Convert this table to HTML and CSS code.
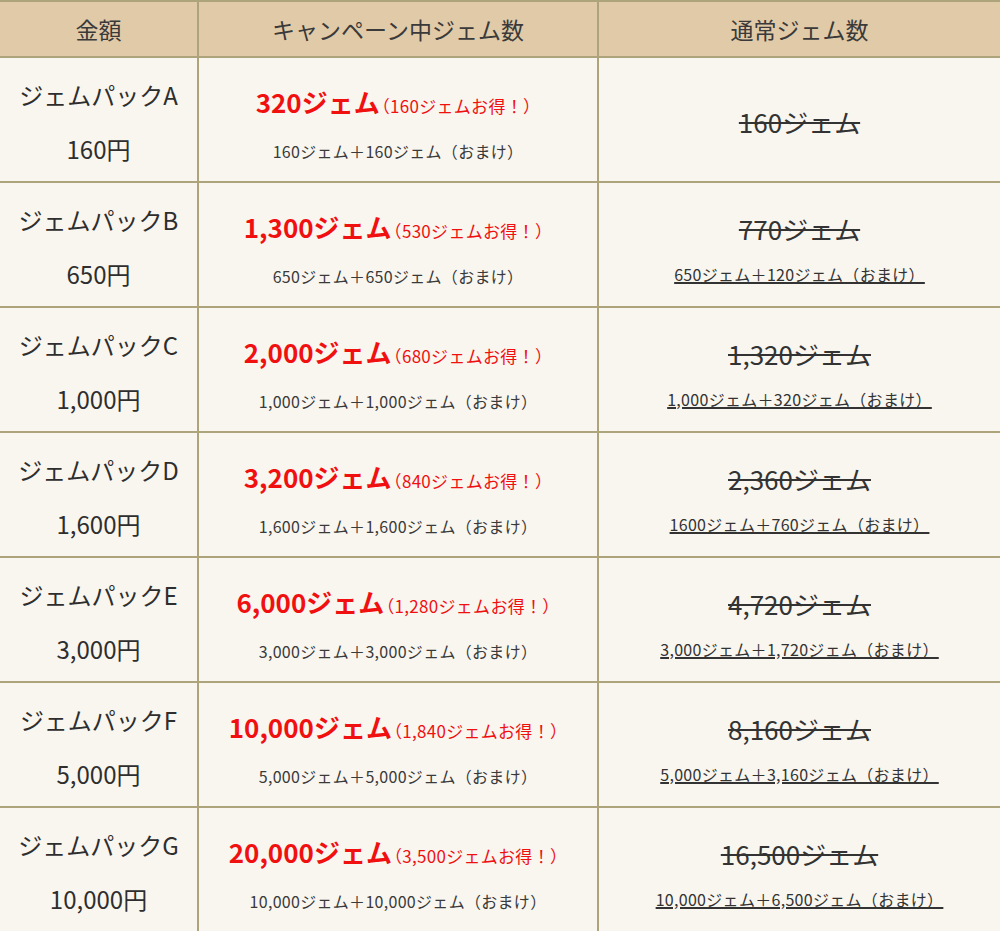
FILE: index.html
```html
<!DOCTYPE html>
<html lang="ja">
<head>
<meta charset="utf-8">
<link rel="stylesheet" href="styles.css">
</head>
<body>
<div class="table">
  <div class="cell head">金額</div>
  <div class="cell head">キャンペーン中ジェム数</div>
  <div class="cell head last">通常ジェム数</div>

  <div class="cell name"><div class="l">ジェムパックA</div><div class="l">160円</div></div>
  <div class="cell camp"><div class="red"><span class="big">320ジェム</span><span class="sm">（160ジェムお得！）</span></div><div class="sub">160ジェム＋160ジェム（おまけ）</div></div>
  <div class="cell norm single last"><div class="strike">160ジェム</div></div>

  <div class="cell name"><div class="l">ジェムパックB</div><div class="l">650円</div></div>
  <div class="cell camp"><div class="red"><span class="big">1,300ジェム</span><span class="sm">（530ジェムお得！）</span></div><div class="sub">650ジェム＋650ジェム（おまけ）</div></div>
  <div class="cell norm last"><div class="strike">770ジェム</div><div class="under">650ジェム＋120ジェム（おまけ）</div></div>

  <div class="cell name"><div class="l">ジェムパックC</div><div class="l">1,000円</div></div>
  <div class="cell camp"><div class="red"><span class="big">2,000ジェム</span><span class="sm">（680ジェムお得！）</span></div><div class="sub">1,000ジェム＋1,000ジェム（おまけ）</div></div>
  <div class="cell norm last"><div class="strike">1,320ジェム</div><div class="under">1,000ジェム＋320ジェム（おまけ）</div></div>

  <div class="cell name"><div class="l">ジェムパックD</div><div class="l">1,600円</div></div>
  <div class="cell camp"><div class="red"><span class="big">3,200ジェム</span><span class="sm">（840ジェムお得！）</span></div><div class="sub">1,600ジェム＋1,600ジェム（おまけ）</div></div>
  <div class="cell norm last"><div class="strike">2,360ジェム</div><div class="under">1600ジェム＋760ジェム（おまけ）</div></div>

  <div class="cell name"><div class="l">ジェムパックE</div><div class="l">3,000円</div></div>
  <div class="cell camp"><div class="red"><span class="big">6,000ジェム</span><span class="sm">（1,280ジェムお得！）</span></div><div class="sub">3,000ジェム＋3,000ジェム（おまけ）</div></div>
  <div class="cell norm last"><div class="strike">4,720ジェム</div><div class="under">3,000ジェム＋1,720ジェム（おまけ）</div></div>

  <div class="cell name"><div class="l">ジェムパックF</div><div class="l">5,000円</div></div>
  <div class="cell camp"><div class="red"><span class="big">10,000ジェム</span><span class="sm">（1,840ジェムお得！）</span></div><div class="sub">5,000ジェム＋5,000ジェム（おまけ）</div></div>
  <div class="cell norm last"><div class="strike">8,160ジェム</div><div class="under">5,000ジェム＋3,160ジェム（おまけ）</div></div>

  <div class="cell name"><div class="l">ジェムパックG</div><div class="l">10,000円</div></div>
  <div class="cell camp"><div class="red"><span class="big">20,000ジェム</span><span class="sm">（3,500ジェムお得！）</span></div><div class="sub">10,000ジェム＋10,000ジェム（おまけ）</div></div>
  <div class="cell norm last"><div class="strike">16,500ジェム</div><div class="under">10,000ジェム＋6,500ジェム（おまけ）</div></div>
</div>
</body>
</html>
```

FILE: styles.css
```css
html, body {
  margin: 0;
  padding: 0;
  background: #f9f6f0;
}
body {
  font-family: "Noto Sans CJK JP", "Noto Sans", sans-serif;
  color: #333;
  overflow: hidden;
}
.table {
  display: grid;
  grid-template-columns: 199px 400px 1fr;
  width: 1000px;
}
.cell {
  box-sizing: border-box;
  height: 125px;
  border-right: 2px solid #aea47b;
  border-bottom: 2px solid #aea47b;
  display: flex;
  flex-direction: column;
  align-items: center;
  justify-content: center;
  text-align: center;
  background: #f9f6f0;
  white-space: nowrap;
}
.cell.last {
  border-right: none;
}
.head {
  height: 58px;
  border-top: 2px solid #aea47b;
  background: #e1caa8;
  font-size: 23px;
  line-height: 30px;
  color: #3a3a3a;
}
.name {
  padding-top: 5px;
  font-size: 24px;
  line-height: 54px;
  color: #2e2e2e;
}
.camp, .norm {
  padding-top: 12px;
}
.norm.single {
  padding-top: 5px;
}
.red {
  color: #f01010;
  line-height: 46px;
}
.big {
  font-size: 26px;
  font-weight: bold;
}
.sm {
  font-size: 17px;
  letter-spacing: 0.3px;
  margin-left: -7px;
}
.sub {
  font-size: 16px;
  letter-spacing: 0.3px;
  line-height: 44px;
  color: #3a3a3a;
}
.strike {
  font-size: 26px;
  line-height: 46px;
  text-decoration: line-through;
  text-decoration-thickness: 2px;
  color: #333;
}
.under {
  font-size: 16px;
  letter-spacing: 0.3px;
  line-height: 44px;
  text-decoration: underline;
  text-decoration-thickness: 2px;
  color: #333;
}
```
